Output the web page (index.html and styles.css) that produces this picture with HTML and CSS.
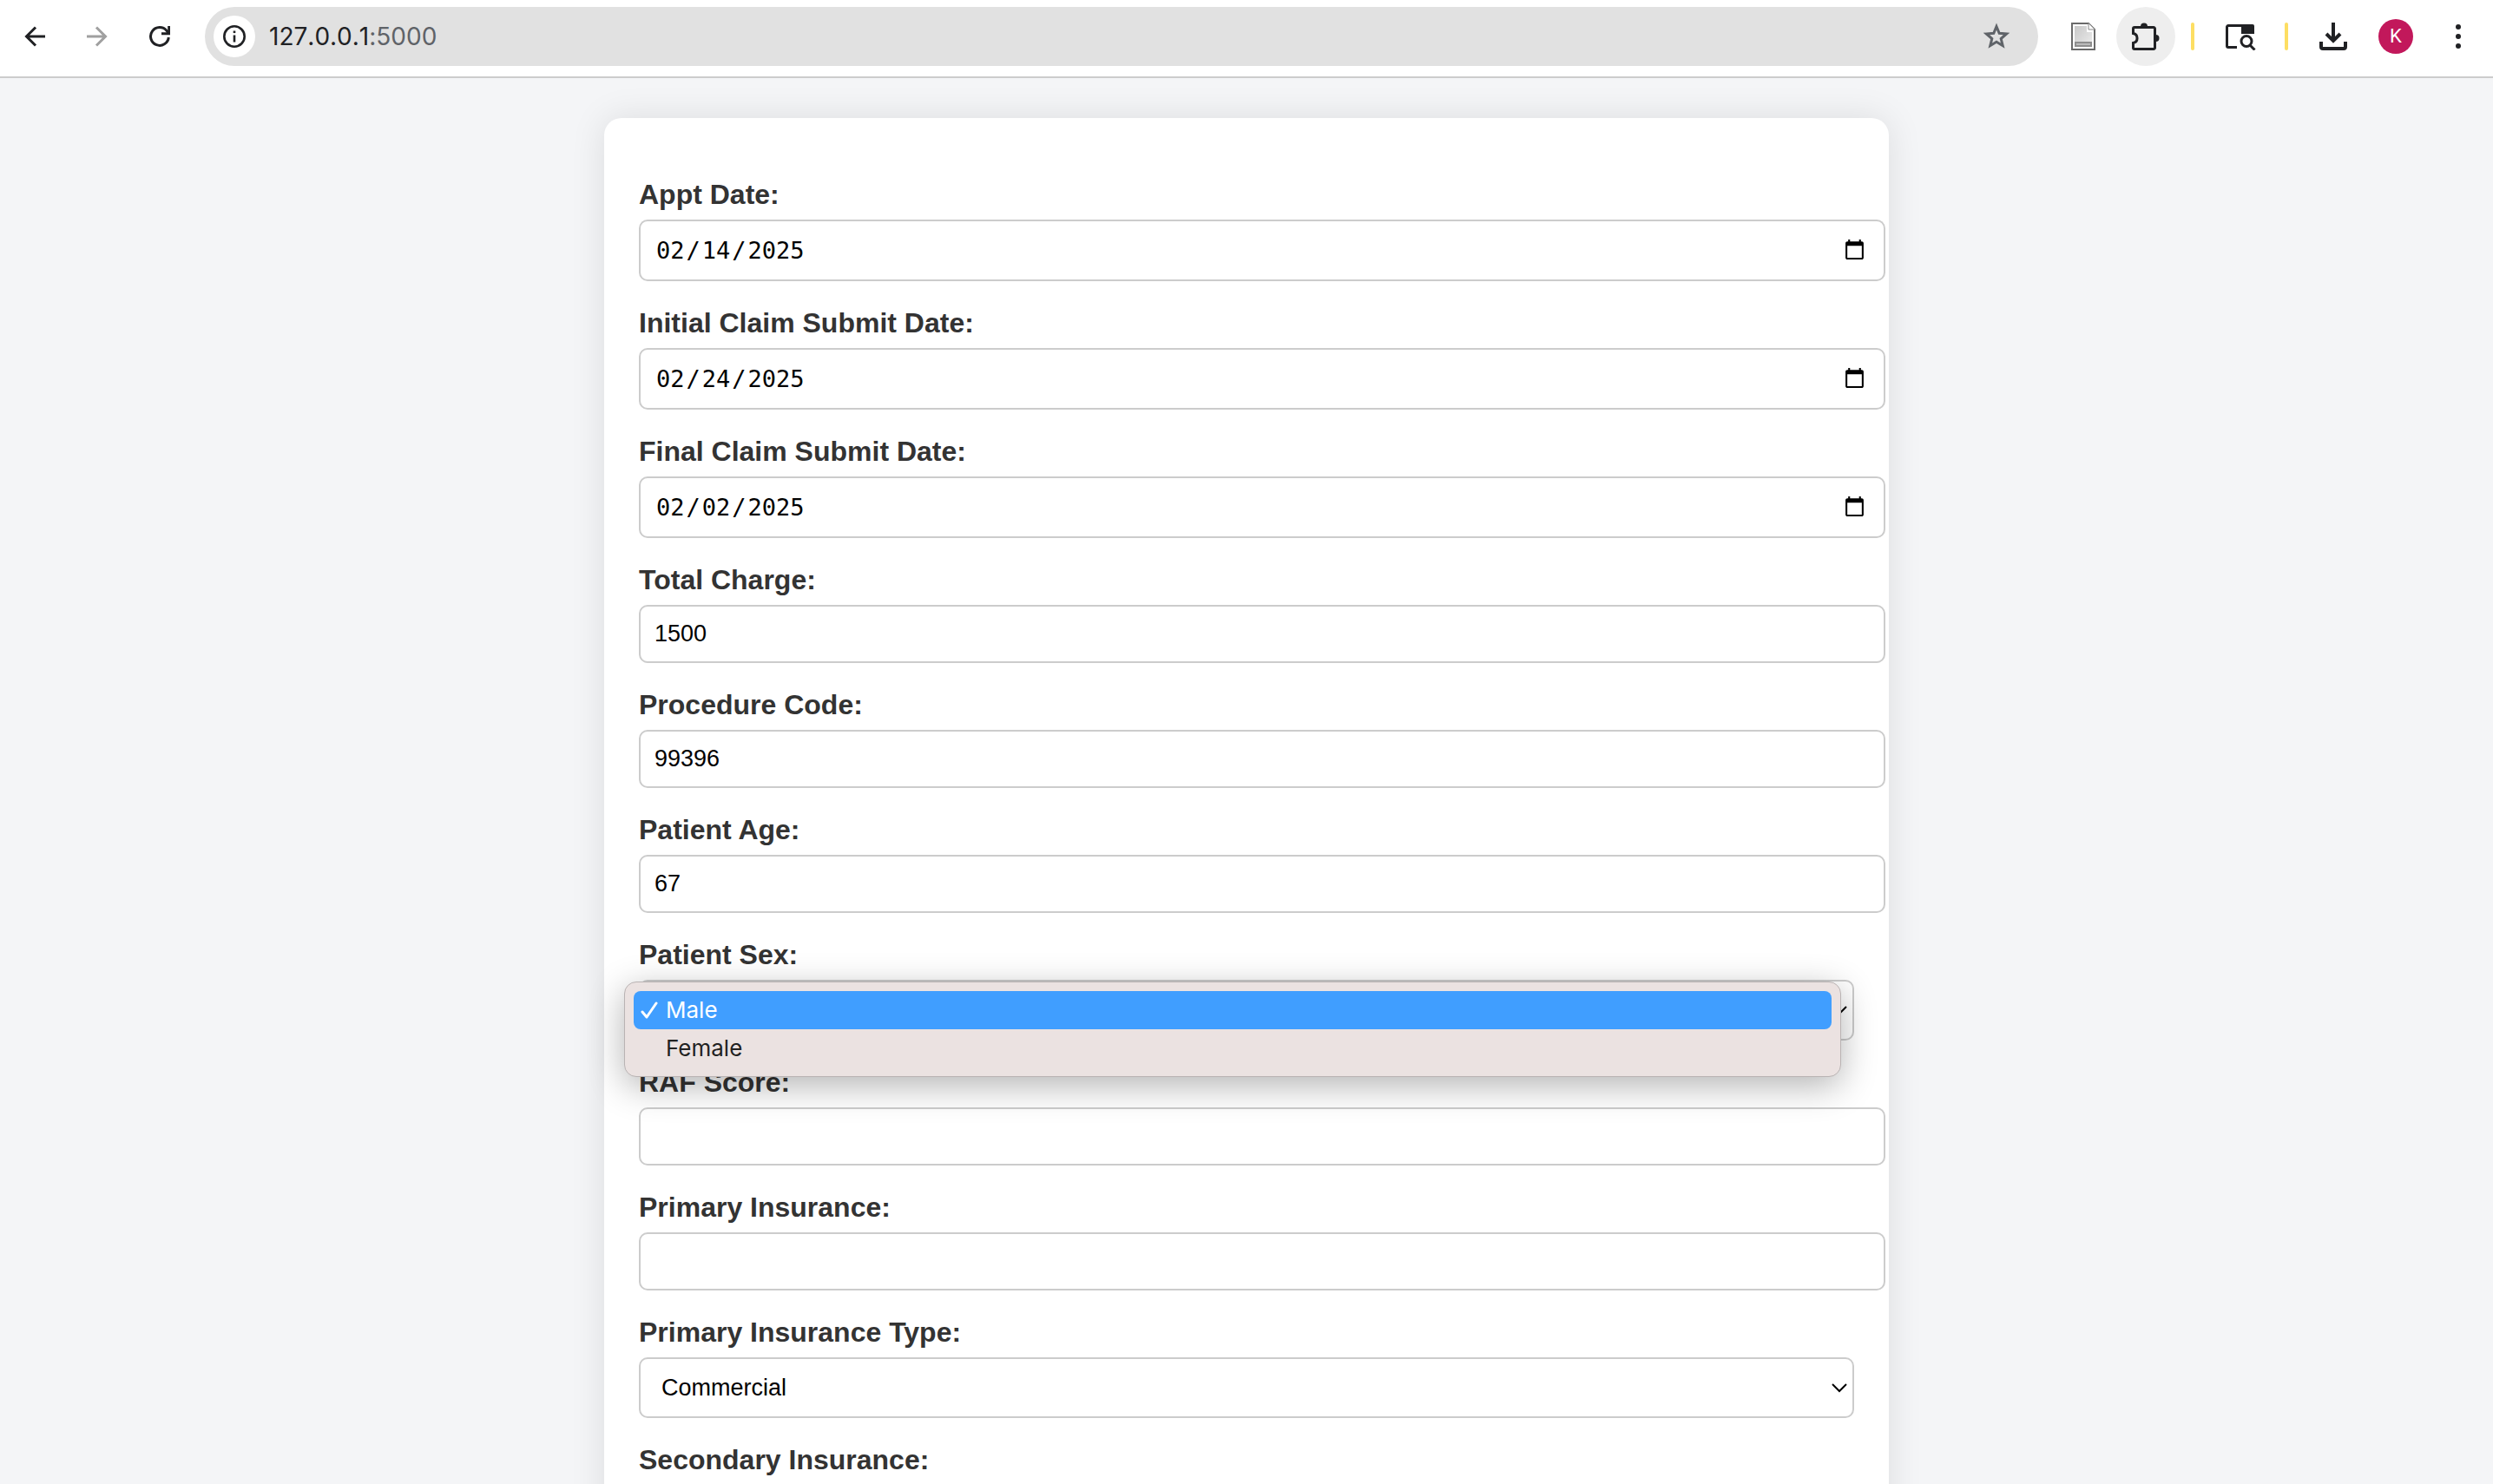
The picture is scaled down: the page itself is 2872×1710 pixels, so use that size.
FILE: index.html
```html
<!DOCTYPE html>
<html lang="en-US">
<head>
<meta charset="utf-8">
<title>127.0.0.1:5000</title>
<link rel="stylesheet" href="styles.css">
</head>
<body>
<header class="toolbar">
  <nav class="nav">
    <button class="icon-btn" aria-label="Back"><svg width="24" height="24" viewBox="0 0 24 24" fill="none" stroke="#202124" stroke-width="3"><path d="M24 12H3M13 1.5 2.5 12 13 22.5"/></svg></button>
    <button class="icon-btn" aria-label="Forward" disabled><svg width="24" height="24" viewBox="0 0 24 24" fill="none" stroke="#a0a0a0" stroke-width="3"><path d="M0 12h21M11 1.5 21.500 12 11 22.500"/></svg></button>
    <button class="icon-btn" aria-label="Reload"><svg width="24" height="24" viewBox="0 0 24 24" fill="none" stroke="#202124" stroke-width="3"><path d="M22.300 13A10.400 10.400 0 1 1 20 5.400L22.500 8.500"/><path d="M22.700 0v8.700H14"/></svg></button>
  </nav>
  <div class="omnibox">
    <button class="site-info" aria-label="Site information"><svg width="26" height="26" viewBox="0 0 26 26" fill="none" stroke="#202124"><circle cx="13" cy="13" r="11.700" stroke-width="2.600"/><path d="M13 11.500v8" stroke-width="2.600"/><path d="M13 6.500v2.600" stroke-width="2.600"/></svg></button>
    <div class="url" role="textbox" aria-label="Address">127.0.0.1<span class="port">:5000</span></div>
    <button class="icon-btn" aria-label="Bookmark"><svg width="32" height="32" viewBox="0 0 32 32" fill="none" stroke="#5f6368" stroke-width="3"><path d="M16 4.500 19.200 12.300 27.600 13 21.200 18.500 23.200 26.700 16 22.300 8.800 26.700 10.800 18.500 4.400 13 12.800 12.300Z"/></svg></button>
  </div>
  <div class="tools">
    <button class="icon-btn" aria-label="Document extension"><svg width="28" height="32" viewBox="0 0 28 32"><defs><linearGradient id="paper" x1="0" y1="0" x2="1" y2="1"><stop offset="0" stop-color="#c8c8c8"/><stop offset="1" stop-color="#ececec"/></linearGradient></defs><path d="M1 1h19l7 7v23H1Z" fill="#fff" stroke="#6a6a6a" stroke-width="2"/><path d="M4 4h14v7h6v17H4Z" fill="url(#paper)"/><path d="M20 1v7h7" fill="#fff" stroke="#8a8a8a"/><path d="M5 23h18v4H5Z" fill="#bbb" stroke="#8e8e8e" stroke-width="2"/></svg></button>
    <button class="extensions" aria-label="Extensions"><svg width="32" height="32" viewBox="0 0 32 32"><path d="M3 5.500h22a1.500 1.500 0 0 1 1.500 1.500v22a1.500 1.500 0 0 1-1.500 1.500H3a1.500 1.500 0 0 1-1.500-1.500v-5.500a5.600 5.600 0 0 0 0-11V7A1.500 1.500 0 0 1 3 5.500Z" fill="none" stroke="#202124" stroke-width="3"/><path d="M10 4.500a4 4 0 0 1 8 0ZM27.500 14a4 4 0 0 1 0 8Z" fill="#202124"/></svg></button>
    <span class="divider"></span>
    <button class="icon-btn tab-search" aria-label="Search tabs"><svg width="36" height="32" viewBox="0 0 36 32" fill="none" stroke="#202124" stroke-width="3"><path d="M13 28.500H3A1.500 1.500 0 0 1 1.500 27V5A1.500 1.500 0 0 1 3 3.500h28"/><path d="M18 2h13a2 2 0 0 1 2 2v9H18Z" fill="#202124" stroke="none"/><circle cx="24" cy="21.500" r="6"/><path d="m28 26 5.500 5.500"/></svg></button>
    <span class="divider"></span>
    <button class="icon-btn" aria-label="Downloads"><svg width="32" height="32" viewBox="0 0 32 32" fill="none" stroke="#202124" stroke-width="4"><path d="M16 0v21M8 13l8 8 8-8M2 22v6a2 2 0 0 0 2 2h24a2 2 0 0 0 2-2v-6"/></svg></button>
    <button class="avatar" aria-label="Profile">K</button>
    <button class="icon-btn" aria-label="Menu"><svg width="6" height="32" viewBox="0 0 6 32" fill="#202124"><circle cx="3" cy="5" r="3"/><circle cx="3" cy="16" r="3"/><circle cx="3" cy="27" r="3"/></svg></button>
  </div>
</header>
<main class="page">
  <form class="card">
    <label class="label" for="appt">Appt Date:</label>
    <input class="field field-date" type="date" id="appt" value="2025-02-14">
    <label class="label" for="initial">Initial Claim Submit Date:</label>
    <input class="field field-date" type="date" id="initial" value="2025-02-24">
    <label class="label" for="final">Final Claim Submit Date:</label>
    <input class="field field-date" type="date" id="final" value="2025-02-02">
    <label class="label" for="charge">Total Charge:</label>
    <input class="field" type="text" id="charge" value="1500">
    <label class="label" for="code">Procedure Code:</label>
    <input class="field" type="text" id="code" value="99396">
    <label class="label" for="age">Patient Age:</label>
    <input class="field" type="text" id="age" value="67">
    <label class="label" for="sex">Patient Sex:</label>
    <div class="select-wrap">
      <select class="select" id="sex"><option selected>Male</option><option>Female</option></select>
      <svg class="chevron" width="18" height="12" viewBox="0 0 18 12" fill="none" stroke="#000" stroke-width="2"><path d="m1 1 8 8 8-8"/></svg>
      <ul class="menu" role="listbox" aria-label="Patient Sex">
        <li class="option option-active" role="option" aria-selected="true"><svg class="check" width="20" height="20" viewBox="0 0 20 20" fill="none" stroke="#fff" stroke-width="3" stroke-linecap="round" stroke-linejoin="round"><path d="m2 12 5 6L18 2"/></svg>Male</li>
        <li class="option" role="option" aria-selected="false"><span class="check"></span>Female</li>
      </ul>
    </div>
    <label class="label" for="raf">RAF Score:</label>
    <input class="field" type="text" id="raf">
    <label class="label" for="primary">Primary Insurance:</label>
    <input class="field" type="text" id="primary">
    <label class="label" for="ptype">Primary Insurance Type:</label>
    <div class="select-wrap">
      <select class="select" id="ptype"><option selected>Commercial</option></select>
      <svg class="chevron" width="18" height="12" viewBox="0 0 18 12" fill="none" stroke="#000" stroke-width="2"><path d="m1 1 8 8 8-8"/></svg>
    </div>
    <label class="label" for="secondary">Secondary Insurance:</label>
    <input class="field" type="text" id="secondary">
  </form>
</main>
</body>
</html>
```
FILE: styles.css
```css
body {
  margin: 0;
  height: 100vh;
  display: flex;
  flex-direction: column;
  overflow: hidden;
  background: #f4f5f7;
  font-family: "Liberation Sans", Arial, sans-serif;
}

button {
  margin: 0;
  padding: 0;
  border: 0;
  background: none;
}

.toolbar {
  display: flex;
  align-items: center;
  gap: 38px;
  padding: 8px 37px 12px 28px;
  border-bottom: 2px solid #ccc;
  background: #fff;
}

.icon-btn {
  display: flex;
}

.nav {
  display: flex;
  gap: 48px;
  margin-right: 2px;
}

.omnibox {
  flex: 1;
  display: flex;
  align-items: center;
  box-sizing: border-box;
  height: 68px;
  padding: 0 32px 0 10px;
  border-radius: 34px;
  background: #e1e1e1;
}

.site-info {
  display: flex;
  align-items: center;
  justify-content: center;
  width: 48px;
  height: 48px;
  border-radius: 50%;
  background: #fff;
}

.url {
  flex: 1;
  padding-left: 16px;
  font: 28px/40px Inter, sans-serif;
  font-kerning: none;
  font-feature-settings: "calt" 0;
  color: #202124;
}

.port {
  color: #5f6368;
}

.tools {
  display: flex;
  align-items: center;
}

.extensions {
  display: flex;
  align-items: center;
  justify-content: center;
  width: 68px;
  height: 68px;
  margin: 0 18px 0 24px;
  border-radius: 50%;
  background: #eee;
}

.divider {
  width: 4px;
  height: 32px;
  margin-right: 36px;
  border-radius: 2px;
  background: #fdde63;
}

.tab-search {
  margin-right: 32px;
}

.avatar {
  width: 40px;
  height: 40px;
  margin: 0 49px 0 36px;
  border-radius: 50%;
  background: #c2185b;
  color: #fff;
  font: 22px/40px Roboto, sans-serif;
  text-align: center;
}

.page {
  flex: 1;
  min-height: 0;
  overflow: hidden;
  padding: 46px 40px 0;
}

.card {
  max-width: 1400px;
  margin: 0 auto;
  padding: 40px;
  border-radius: 20px;
  background: #fff;
  box-shadow: 0 0 40px rgba(0, 0, 0, 0.1);
}

.label {
  display: block;
  margin: 30px 0 10px;
  font-size: 32px;
  line-height: 37px;
  font-weight: bold;
  color: #333;
}

.field,
.select {
  display: block;
  width: 100%;
  margin: 0;
  border: 2px solid #ccc;
  border-radius: 10px;
  background: #fff;
  color: #000;
  font-family: "Liberation Sans", Arial, sans-serif;
  font-size: 27px;
}

.field {
  box-sizing: content-box;
  height: 31px;
  padding: 16px;
}

.field-date {
  height: 35px;
  font-family: "DejaVu Sans Mono", monospace;
}

.field-date::-webkit-datetime-edit-month-field,
.field-date::-webkit-datetime-edit-day-field,
.field-date::-webkit-datetime-edit-year-field {
  padding: 0 2px;
}

.field-date::-webkit-calendar-picker-indicator {
  margin-right: 2px;
}

.select {
  appearance: none;
  box-sizing: border-box;
  height: 70px;
  padding: 0 24px;
}

.select-wrap {
  position: relative;
}

.chevron {
  position: absolute;
  right: 8px;
  top: 30px;
}

.menu {
  position: absolute;
  top: 2px;
  left: -17px;
  right: 15px;
  margin: 0;
  padding: 10px;
  border: 1px solid #b9b3b3;
  border-radius: 14px;
  background: #ebe2e1;
  box-shadow: 0 10px 40px rgba(0, 0, 0, 0.3);
  list-style: none;
  font: 26px/46px Inter, sans-serif;
  color: #222;
}

.option {
  display: flex;
  align-items: center;
  gap: 9px;
  height: 44px;
  padding-left: 8px;
  border-radius: 8px;
}

.option-active {
  background: #409eff;
  color: #fff;
}

.check {
  width: 20px;
}
```
